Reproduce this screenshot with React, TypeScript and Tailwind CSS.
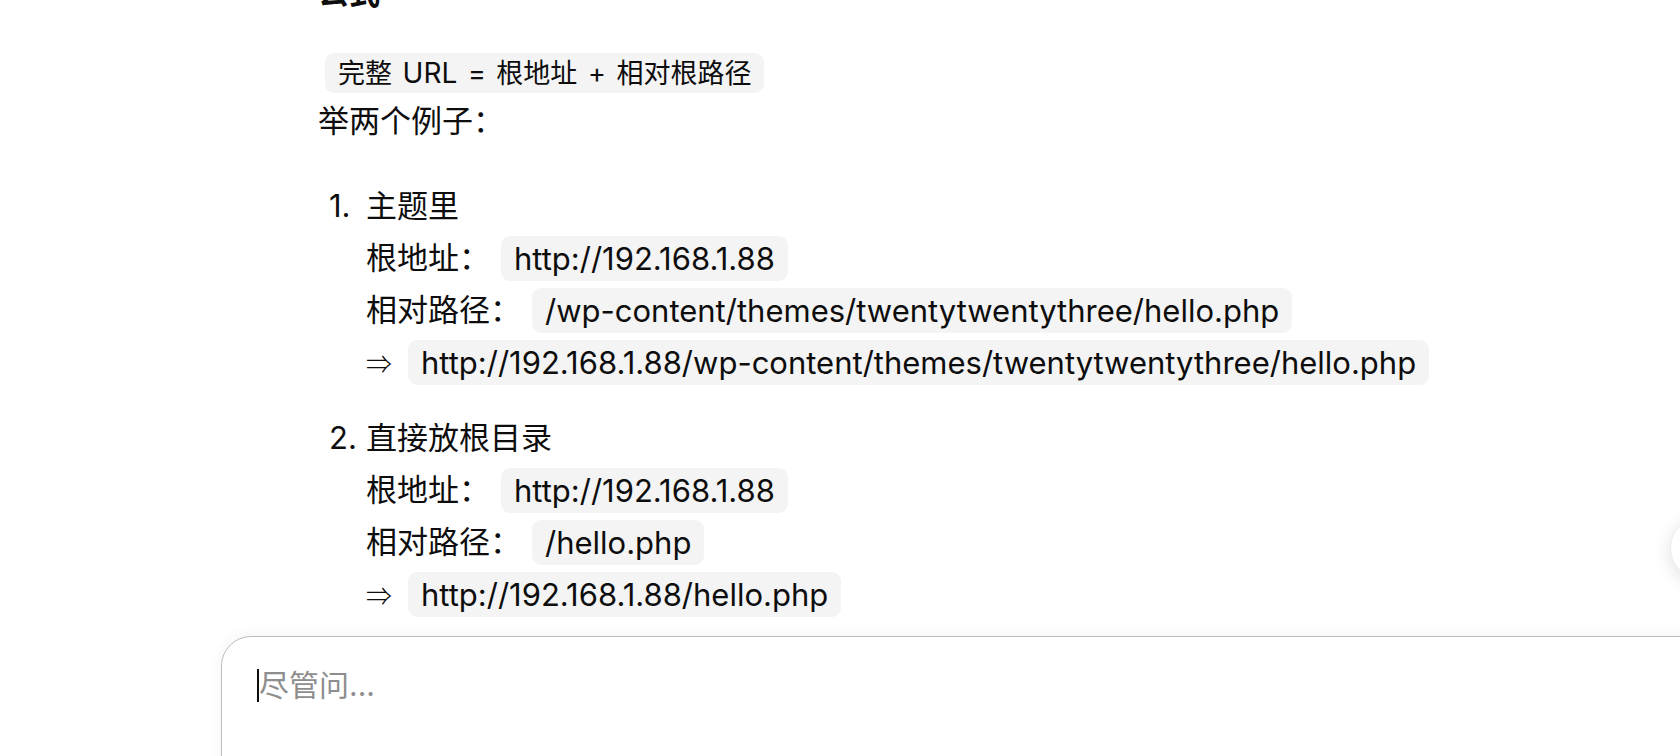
import { ArrowDown } from "lucide-react";

const codeCls =
  "inline-block h-[45px] leading-[45px] px-[13px] rounded-[9px] bg-[#f4f4f4] align-middle";

function Row({ label, code }: { label: string; code: string }) {
  return (
    <div className="h-[52px] flex items-center">
      {label === "⇒" ? (
        <span className="w-[31px] text-[26px] font-light" style={{ fontFamily: '"Noto Sans CJK SC", sans-serif' }}>
          {label}
        </span>
      ) : (
        <span>{label}</span>
      )}
      <code className={`${codeCls} ml-[11px]`} style={{ fontFamily: "inherit" }}>
        {code}
      </code>
    </div>
  );
}

function Item({
  n,
  title,
  rows,
}: {
  n: string;
  title: string;
  rows: { label: string; code: string }[];
}) {
  return (
    <li className="flex">
      <span className="w-[37px] shrink-0 h-[52px] leading-[52px]">{n}</span>
      <div>
        <div className="h-[52px] leading-[52px]">{title}</div>
        {rows.map((r, i) => (
          <Row key={i} label={r.label} code={r.code} />
        ))}
      </div>
    </li>
  );
}

export default function App() {
  return (
    <main
      className="relative w-[1680px] h-[756px] overflow-hidden bg-white text-[#0d0d0d] flex flex-col"
      style={{ fontFamily: 'Inter, "Noto Sans CJK SC", sans-serif' }}
    >
      {/* ================= THREAD ================= */}
      <section className="flex-1 overflow-hidden pl-[318px] text-[31px]">
        <h3 className="mt-[-27px] h-[40px] leading-[40px] font-bold">公式</h3>

        <div className="mt-[36px] h-[48px] flex items-center">
          <code
            className="ml-[7px] inline-block h-[40px] leading-[40px] px-[13px] rounded-[9px] bg-[#f4f4f4] text-[27px] [word-spacing:3px]"
            style={{ fontFamily: "inherit" }}
          >
            完整 <span className="text-[28px]">URL</span> = 根地址 + 相对根路径
          </code>
        </div>
        <p className="h-[48px] leading-[48px]">举两个例子：</p>

        <ol className="mt-[35px] pl-[11px] flex flex-col gap-[24px]">
          <Item
            n="1."
            title="主题里"
            rows={[
              { label: "根地址：", code: "http://192.168.1.88" },
              {
                label: "相对路径：",
                code: "/wp-content/themes/twentytwentythree/hello.php",
              },
              {
                label: "⇒",
                code: "http://192.168.1.88/wp-content/themes/twentytwentythree/hello.php",
              },
            ]}
          />
          <Item
            n="2."
            title="直接放根目录"
            rows={[
              { label: "根地址：", code: "http://192.168.1.88" },
              { label: "相对路径：", code: "/hello.php" },
              { label: "⇒", code: "http://192.168.1.88/hello.php" },
            ]}
          />
        </ol>
      </section>

      {/* ================= COMPOSER ================= */}
      <div className="shrink-0 h-[120px] pl-[221px]">
        <div className="w-[1600px] h-[160px] rounded-[30px] border-[1.5px] border-[#bdbdbd] bg-white shadow-[0_-2px_14px_rgba(0,0,0,0.05)] pl-[35px] pt-[30px]">
          <div className="flex items-center h-[36px] text-[30px]">
            <span className="w-[2px] h-[33px] bg-[#0d0d0d]" />
            <span className="text-[#8e8e8e]">尽管问...</span>
          </div>
        </div>
      </div>

      {/* scroll to bottom button */}
      <button className="absolute left-[1670px] top-[516px] w-[64px] h-[64px] rounded-full bg-white border border-[#ececec] shadow-[0_4px_18px_rgba(0,0,0,0.12)] flex items-center justify-center">
        <ArrowDown size={24} />
      </button>
    </main>
  );
}
